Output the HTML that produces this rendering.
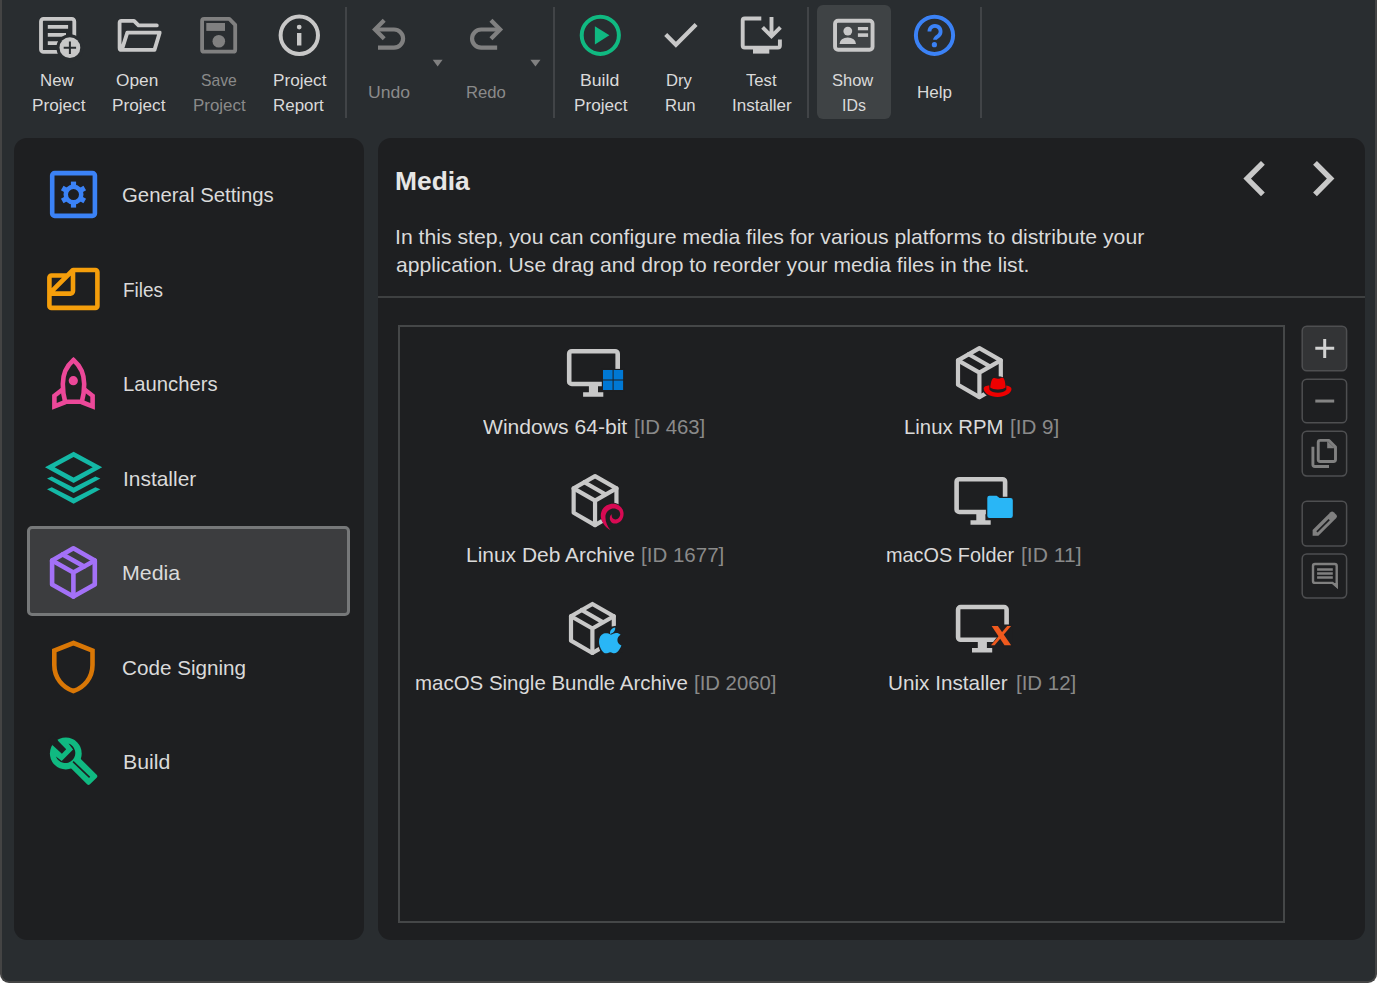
<!DOCTYPE html>
<html lang="en">
<head>
<meta charset="utf-8">
<title>install4j - Media</title>
<style>
html,body{margin:0;padding:0;background:#fff;}
body{width:1377px;height:983px;overflow:hidden;position:relative;font-family:"Liberation Sans",sans-serif;color:#dadada;}
#win{position:absolute;left:0;top:0;width:1377px;height:983px;box-sizing:border-box;background:#292d30;border:2px solid #444;border-top:0;border-radius:0 0 9px 9px;}
.sep{position:absolute;top:7px;height:111px;width:2px;background:#414447;}
.tbsel{position:absolute;left:817px;top:5px;width:74px;height:114px;border-radius:6px;background:#3f4345;}
.panel{position:absolute;top:138px;height:802px;background:#1e1f21;border-radius:13px;}
#side{left:14px;width:350px;}
#main{left:378px;width:987px;}
.navsel{position:absolute;left:27px;top:526px;width:323px;height:90px;box-sizing:border-box;border:3px solid #767879;border-radius:5px;background:#3c3d3f;}
.hr{position:absolute;left:378px;top:296px;width:987px;height:2px;background:#3e4041;}
.list{position:absolute;left:398px;top:325px;width:887px;height:598px;box-sizing:border-box;border:2px solid #454748;}
.tx{position:absolute;white-space:pre;line-height:1;transform-origin:0 0;color:#dadada;}
.dim{color:#8a8a8a;}
.bold{font-weight:bold;color:#e6e6e6;}
svg{position:absolute;left:0;top:0;overflow:visible;}
</style>
</head>
<body>
<div id="win"></div>

<!-- ===== toolbar ===== -->
<div id="toolbar">
<div class="tbsel"></div>
<div class="sep" style="left:344.5px"></div>
<div class="sep" style="left:552.7px"></div>
<div class="sep" style="left:806.5px"></div>
<div class="sep" style="left:979.8px"></div>
<svg width="1000" height="125" viewBox="0 0 1000 125" fill="none">
 <!-- new project -->
 <g stroke="#c8c8c8" stroke-width="3.8" fill="none">
  <rect x="41" y="18.9" width="33.3" height="33" rx="2.5"/>
  <path d="M47.8 26.8H68.1M47.8 34.9H66M47.8 43.1H58"/>
 </g>
 <circle cx="69.9" cy="47.7" r="13.5" fill="#292d30"/>
 <circle cx="69.9" cy="47.7" r="10.4" fill="#c8c8c8"/>
 <path d="M63.7 47.7H76.1M69.9 41.5V53.9" stroke="#292d30" stroke-width="2"/>
 <!-- open project -->
 <path d="M156.8 25.4H138.5L134 20.8H121.6a2 2 0 0 0-2 2V47.9a2 2 0 0 0 2 2H154.5L159.7 32.6H127.3L121.9 49.6" stroke="#c8c8c8" stroke-width="3.8" stroke-linejoin="round" stroke-linecap="round"/>
 <!-- save project -->
 <path d="M202.1 20.9a2 2 0 0 1 2-2H229.3L235.2 24.8V49.7a2 2 0 0 1-2 2H204.1a2 2 0 0 1-2-2Z" stroke="#808080" stroke-width="3.8" stroke-linejoin="round"/>
 <rect x="206.3" y="23" width="18.7" height="7.9" fill="#808080"/>
 <circle cx="218.8" cy="41.3" r="6.3" fill="#808080"/>
 <!-- project report -->
 <circle cx="299.3" cy="35.3" r="18.7" stroke="#c8c8c8" stroke-width="4"/>
 <circle cx="299.2" cy="27.1" r="2.4" fill="#c8c8c8"/>
 <rect x="297" y="33" width="4.4" height="12.5" fill="#c8c8c8"/>
 <!-- undo -->
 <g id="undo" stroke="#808080" stroke-width="4.2">
  <path d="M384.2 20.3L375 29.5L384.2 38.7"/>
  <path d="M376 29.5H394a9.1 9.1 0 0 1 0 18.2H378"/>
 </g>
 <path d="M432.7 59.8H442.6L437.65 66.6Z" fill="#808080"/>
 <!-- redo -->
 <g transform="translate(875.15 0) scale(-1 1)" stroke="#808080" stroke-width="4.2">
  <path d="M384.2 20.3L375 29.5L384.2 38.7"/>
  <path d="M376 29.5H394a9.1 9.1 0 0 1 0 18.2H378"/>
 </g>
 <path d="M530.4 59.8H540.5L535.45 66.6Z" fill="#808080"/>
 <!-- build project -->
 <circle cx="600.3" cy="35.3" r="18.6" stroke="#10b981" stroke-width="4"/>
 <path d="M594.9 26.3V44.5L609.4 35.3Z" fill="#10b981"/>
 <!-- dry run -->
 <path d="M665.7 34.4L675.9 44.7L696.1 24.4" stroke="#c8c8c8" stroke-width="4.2"/>
 <!-- test installer -->
 <path d="M761.3 18.5H744.7a2 2 0 0 0-2 2V45.6a2 2 0 0 0 2 2H777.9a2 2 0 0 0 2-2V39.4" stroke="#c8c8c8" stroke-width="3.9"/>
 <rect x="753" y="47" width="16.3" height="6.6" fill="#c8c8c8"/>
 <path d="M771.5 16.9V35M762.6 27.4L771.5 36.3L780.4 27.4" stroke="#c8c8c8" stroke-width="3.9"/>
 <!-- show ids -->
 <rect x="835.05" y="20.75" width="37.5" height="29" rx="3" stroke="#c8c8c8" stroke-width="3.9"/>
 <circle cx="847.8" cy="31.1" r="4.4" fill="#c8c8c8"/>
 <path d="M839.5 43.9a8.25 6.4 0 0 1 16.5 0Z" fill="#c8c8c8"/>
 <rect x="857.9" y="27" width="10.2" height="3.3" fill="#c8c8c8"/>
 <rect x="857.9" y="33.3" width="10.2" height="3.6" fill="#c8c8c8"/>
 <!-- help -->
 <circle cx="934.5" cy="35.3" r="18.6" stroke="#3b82f6" stroke-width="4"/>
 <path d="M929.4 31.5a5.6 5.6 0 1 1 8.8 4.6c-2.2 1.5-3.2 2.6-3.2 3.6" stroke="#3b82f6" stroke-width="3.8"/>
 <circle cx="934.4" cy="44.7" r="2.6" fill="#3b82f6"/>
</svg>
</div>

<!-- ===== sidebar ===== -->
<div id="side" class="panel"></div>
<div class="navsel"></div>
<svg width="370" height="983" viewBox="0 0 370 983" fill="none">
 <!-- general settings -->
 <rect x="52.2" y="173.1" width="42.7" height="42.8" rx="2.5" stroke="#3b82f6" stroke-width="4.6"/>
 <g transform="translate(73.5 194.6)" fill="#3b82f6">
  <circle r="7.75" fill="none" stroke="#3b82f6" stroke-width="4.5"/>
  <rect x="-2.6" y="-13" width="5.2" height="5"/>
  <rect x="-2.6" y="-13" width="5.2" height="5" transform="rotate(60)"/>
  <rect x="-2.6" y="-13" width="5.2" height="5" transform="rotate(120)"/>
  <rect x="-2.6" y="-13" width="5.2" height="5" transform="rotate(180)"/>
  <rect x="-2.6" y="-13" width="5.2" height="5" transform="rotate(240)"/>
  <rect x="-2.6" y="-13" width="5.2" height="5" transform="rotate(300)"/>
 </g>
 <!-- files -->
 <path d="M49.4 293.6L73 270H95.4a2 2 0 0 1 2 2V305.9a2 2 0 0 1-2 2H51.4a2 2 0 0 1-2-2V277.5a2 2 0 0 1 2-2H67.5M73 270V291.1a2.5 2.5 0 0 1-2.5 2.5H49.4" stroke="#f59e0b" stroke-width="4.6" stroke-linejoin="round"/>
 <!-- launchers -->
 <g stroke="#ec4899" stroke-width="4.6">
  <path d="M73.5 360C66 366.5 62.8 375 62.8 384C62.8 391 63.8 397 65.2 401.8H81.8C83.2 397 84.2 391 84.2 384C84.2 375 81 366.5 73.5 360Z"/>
  <path d="M62.5 389.5L54.4 395.8V406.3L65.5 402"/>
  <path d="M84.5 389.5L92.6 395.8V406.3L81.5 402"/>
 </g>
 <circle cx="73.3" cy="380.7" r="4.6" fill="#ec4899"/>
 <!-- installer -->
 <path d="M45 467.2L73.6 451.7L102.2 467.2L73.6 482.9ZM54.6 467.2L73.6 457.1L92.7 467.2L73.6 477.4Z" fill="#14b8a6" fill-rule="evenodd"/>
 <path d="M47 478.6L51.8 476.4L73.6 487.6L95.4 476.4L100.4 478.6L73.6 493.1ZM47 489.35L51.8 487.15L73.6 498.35L95.4 487.15L100.4 489.35L73.6 503.85Z" fill="#14b8a6"/>
 <!-- media -->
 <g stroke="#a371f7" stroke-width="4.6" stroke-linejoin="round" stroke-linecap="round">
  <path d="M73.4 548.3L94.8 560.6V584.5L73.4 596.6L52.1 584.5V560.6Z"/>
  <path d="M52.1 560.6L73.4 572.4L94.8 560.6M73.4 572.4V596.6M62.7 554.4L84.1 566.5"/>
 </g>
 <!-- code signing -->
 <path d="M73.4 643L92.5 650.5V665C92.5 678 84 687.5 73.4 691C62.8 687.5 54.3 678 54.3 665V650.5Z" stroke="#d97706" stroke-width="4.6"/>
 <!-- build -->
 <g>
  <circle cx="65.8" cy="753.5" r="15.9" fill="#10b981"/>
  <rect x="65.8" y="746.75" width="38.9" height="13.5" rx="2" transform="rotate(45 65.8 753.5)" fill="#10b981"/>
  <path d="M55.9 756.5A10 10 0 1 0 68.5 743.6L73.1 749.5L61.7 761Z" fill="#1e1f21"/>
  <path d="M52.6 745.2L57.2 739.9L66.2 749.2L61.9 753.8Z" fill="#1e1f21"/>
  <path d="M48 740.5L53 735.5L58 740.5L53 745.5Z" fill="#1e1f21"/>
  <path d="M73.1 761.6L89.6 777.3" stroke="#1e1f21" stroke-width="1.6"/>
 </g>
</svg>

<!-- ===== main ===== -->
<div id="main" class="panel"></div>
<div class="hr"></div>
<div class="list"></div>
<svg width="1377" height="983" viewBox="0 0 1377 983" fill="none">
 <!-- nav chevrons -->
 <path d="M1262.9 162.9L1247.2 178.6L1262.9 194.3M1315 162.9L1330.6 178.6L1315 194.3" stroke="#c8c8c8" stroke-width="5.4"/>
 <!-- buttons -->
 <g stroke="#4e4f51" stroke-width="1.5" fill="none">
  <rect x="1302.2" y="326.15" width="44.4" height="44.7" rx="4.6" fill="#333436"/>
  <rect x="1302.2" y="379.15" width="44.4" height="43.6" rx="4.6"/>
  <rect x="1302.2" y="431.15" width="44.4" height="44.8" rx="4.6"/>
  <rect x="1302.2" y="501.15" width="44.4" height="44.9" rx="4.6"/>
  <rect x="1302.2" y="554.05" width="44.4" height="43.9" rx="4.6"/>
 </g>
 <path d="M1315.3 348.3H1334.2M1324.7 339.1V358.1" stroke="#d2d2d2" stroke-width="3"/>
 <path d="M1315.3 401.05H1334.2" stroke="#848484" stroke-width="3"/>
 <g stroke="#808080" stroke-width="2.9">
  <path d="M1318.25 442.4a2 2 0 0 1 2-2H1329L1335.5 447V459.5a2 2 0 0 1-2 2H1320.25a2 2 0 0 1-2-2Z" stroke-linejoin="round"/>
  <path d="M1312.9 446.7V464.5a2 2 0 0 0 2 2H1329"/>
 </g>
 <path d="M1327.2 441V448.2H1334.8Z" fill="#808080"/>
 <!-- pencil -->
 <g>
  <path d="M1312.6 535.8V530L1330.5 512.2a2.3 2.3 0 0 1 3.2 0L1336.3 514.8a2.3 2.3 0 0 1 0 3.2L1318.4 535.8Z" fill="#808080"/>
  <path d="M1316.3 531.3L1328.6 519L1329.8 520.2L1317.5 532.5Z" fill="#1e1f21"/>
 </g>
 <!-- comment -->
 <path d="M1313 566a2 2 0 0 1 2-2H1334.7a2 2 0 0 1 2 2V586.5L1332.5 582.9H1315a2 2 0 0 1-2-2Z" stroke="#808080" stroke-width="2.4"/>
 <path d="M1332.2 583H1337.9V589Z" fill="#808080"/>
 <path d="M1317.1 569.4H1332.8M1317.1 573.45H1332.8M1317.1 577.45H1332.8" stroke="#808080" stroke-width="2.5"/>

 <!-- list icons -->
 <defs>
  <g id="monitor">
   <rect x="2.3" y="2.3" width="48.5" height="32.8" rx="2.6" stroke="#c8c8c8" stroke-width="4.6"/>
   <path d="M22 35.5H31.1V43.3H36.4V47.9H16.2V43.3H22Z" fill="#c8c8c8"/>
  </g>
  <g id="pkg" stroke="#c8c8c8" stroke-width="4.2" stroke-linejoin="round" stroke-linecap="round">
   <path d="M0 -24.5L21.4 -12.2V12.2L0 24.5L-21.4 12.2V-12.2Z"/>
   <path d="M-21.4 -12.2L0 0L21.4 -12.2M0 0V24.5M-10.7 -18.4L10.7 -6.1"/>
  </g>
 </defs>
 <!-- windows -->
 <g>
  <use href="#monitor" x="566.9" y="348.9"/>
  <rect x="601.8" y="368.9" width="22.5" height="22.2" fill="#1e1f21"/>
  <path d="M603 370.1H612.6V379.6H603ZM613.6 370.1H623.1V379.6H613.6ZM603 380.6H612.6V389.9H603ZM613.6 380.6H623.1V389.9H613.6Z" fill="#0078d4"/>
 </g>
 <!-- linux rpm -->
 <g>
  <use href="#pkg" x="979.4" y="372.6"/>
  <path d="M982.4 388.5C982.4 383 989 376.2 997.7 376.2C1006 376.2 1012.8 383 1012.8 388.5C1012.8 394 1006 398.2 997.6 398.2C989 398.2 982.4 394 982.4 388.5Z" fill="#1e1f21"/>
  <path d="M990.2 387.6C990.6 384.5 991 381.3 992.2 379.3C993 377.9 994.4 377.9 995.4 378.3C997 378.9 998.8 378.9 1000.4 378.2C1001.8 377.6 1003.2 377.5 1004 378.9C1005.2 381.1 1005.4 384.6 1005.6 387.6C1003 390.2 992.8 390.2 990.2 387.6Z" fill="#ee0000"/>
  <path d="M983.7 388.6C983.7 386.7 986.3 385.5 989.4 385.5C989.3 386.8 989.3 388.4 989.5 389.8C992.2 393.8 1003.6 393.8 1006.3 389.8C1006.4 388.4 1006.3 386.9 1006.2 385.6C1009.2 386 1011.5 387.2 1011.5 389.1C1011.5 393.5 1005 396.9 997.6 396.9C990.2 396.9 983.7 393.3 983.7 388.6Z" fill="#ee0000"/>
 </g>
 <!-- linux deb -->
 <g>
  <use href="#pkg" x="595.05" y="500.6"/>
  <circle cx="612.8" cy="515" r="12.2" fill="#1e1f21"/>
  <path d="M610.5 530.2C603.5 526 599.8 519 601 513.2C602.4 507 607.5 503.7 613 503.7C619 503.7 623.6 508.3 623.6 513.8C623.6 519.8 619.4 523.6 615.2 523.6C611.6 523.6 609.6 520.4 609.8 517.8C610 516 610.8 514.8 611.8 514.3C611.2 517 612.6 519.4 615.4 519.4C618 519.4 620.2 517 620.2 514C620.2 510.6 617.2 508.4 613.6 508.4C609.2 508.4 605.4 512 605.4 517C605.4 522 607.4 526.6 610.5 530.2Z" fill="#d70a53"/>
 </g>
 <!-- macos single bundle -->
 <g>
  <use href="#pkg" x="592.4" y="628.45"/>
  <path d="M597.6 640C597.6 632 603 626 612 626.4L616 625.8L617 632L623 636V652L613 655.5H604C600 652 597.6 646 597.6 640Z" fill="#1e1f21"/>
  <path d="M610 633.9C609.6 630.4 612.2 627.9 615.2 627.6C615.6 630.9 613.2 633.6 610 633.9Z" fill="#29b6f6"/>
  <path d="M610.6 634.6C608.6 633.2 606 632.8 603.8 633.6C600.6 634.8 599 638 599 641.6C599 646 601.2 650.4 603.6 652.4C605 653.6 606.6 653.6 608 652.9C609.6 652.1 611 652.1 612.6 652.9C614 653.6 615.6 653.4 617 652.2C618.8 650.6 620.4 648.2 621.4 645.4C618.8 644.4 617.4 642.4 617.4 640C617.4 637.8 618.6 636 620.6 634.8C619 633 616.6 632.8 615 633.2C613.4 633.6 612 634.4 610.6 634.6Z" fill="#29b6f6"/>
 </g>
 <!-- macos folder -->
 <g>
  <use href="#monitor" x="954.3" y="476.9"/>
  <path d="M987.3 498a2.2 2.2 0 0 1 2.2-2.2H996.6L999.6 498.1H1010.6a2.2 2.2 0 0 1 2.2 2.2V515.7a2.2 2.2 0 0 1-2.2 2.2H989.5a2.2 2.2 0 0 1-2.2-2.2Z" fill="#1e1f21" stroke="#1e1f21" stroke-width="2.8"/>
  <path d="M987.3 498a2.2 2.2 0 0 1 2.2-2.2H996.6L999.6 498.1H1010.6a2.2 2.2 0 0 1 2.2 2.2V515.7a2.2 2.2 0 0 1-2.2 2.2H989.5a2.2 2.2 0 0 1-2.2-2.2Z" fill="#29b6f6"/>
 </g>
 <!-- unix installer -->
 <g>
  <use href="#monitor" x="955.8" y="604.7"/>
  <path d="M990.3 624.6H1012.8V646.7H989.4L997.4 636.6Z" fill="#1e1f21"/>
  <path d="M991.6 625.9H997.9L1011.1 645.3H1004.5Z" fill="#f05a1e"/>
  <path d="M1007.2 625.9H1011.1L994.6 645.3H991Z" fill="#f05a1e"/>
 </g>
</svg>

<!-- ===== text ===== -->
<div id="toolbar-labels">
<div id="t_new" class="tx" style="left:39.86px;top:71.61px;font-size:17px;transform:scaleX(0.9900)">New</div>
<div id="t_newp" class="tx" style="left:31.55px;top:96.61px;font-size:17px;transform:scaleX(1.0098)">Project</div>
<div id="t_open" class="tx" style="left:116.12px;top:71.61px;font-size:17px;transform:scaleX(1.0160)">Open</div>
<div id="t_openp" class="tx" style="left:112.25px;top:96.61px;font-size:17px;transform:scaleX(1.0098)">Project</div>
<div id="t_save" class="tx dim" style="left:200.58px;top:71.61px;font-size:17px;transform:scaleX(0.9228)">Save</div>
<div id="t_savep" class="tx dim" style="left:193.25px;top:96.61px;font-size:17px;transform:scaleX(0.9947)">Project</div>
<div id="t_proj" class="tx" style="left:272.85px;top:71.61px;font-size:17px;transform:scaleX(1.0098)">Project</div>
<div id="t_rep" class="tx" style="left:272.83px;top:96.61px;font-size:17px;transform:scaleX(0.9961)">Report</div>
<div id="t_undo" class="tx dim" style="left:367.51px;top:83.61px;font-size:17px;transform:scaleX(1.0358)">Undo</div>
<div id="t_redo" class="tx dim" style="left:466.48px;top:83.61px;font-size:17px;transform:scaleX(0.9806)">Redo</div>
<div id="t_build" class="tx" style="left:580.49px;top:71.61px;font-size:17px;transform:scaleX(1.0394)">Build</div>
<div id="t_buildp" class="tx" style="left:573.55px;top:96.61px;font-size:17px;transform:scaleX(1.0098)">Project</div>
<div id="t_dry" class="tx" style="left:666.15px;top:71.61px;font-size:17px;transform:scaleX(0.9779)">Dry</div>
<div id="t_run" class="tx" style="left:664.87px;top:96.61px;font-size:17px;transform:scaleX(0.9814)">Run</div>
<div id="t_test" class="tx" style="left:746.00px;top:71.61px;font-size:17px;transform:scaleX(0.9799)">Test</div>
<div id="t_inst" class="tx" style="left:731.84px;top:96.61px;font-size:17px;transform:scaleX(1.0046)">Installer</div>
<div id="t_show" class="tx" style="left:831.68px;top:71.61px;font-size:17px;transform:scaleX(0.9696)">Show</div>
<div id="t_ids" class="tx" style="left:841.93px;top:96.61px;font-size:17px;transform:scaleX(0.9352)">IDs</div>
<div id="t_help" class="tx" style="left:917.23px;top:83.61px;font-size:17px;transform:scaleX(1.0020)">Help</div>
</div>
<nav id="nav-labels">
<div id="s_gen" class="tx" style="left:122.49px;top:184.22px;font-size:21px;transform:scaleX(0.9701)">General Settings</div>
<div id="s_files" class="tx" style="left:123.39px;top:279.22px;font-size:21px;transform:scaleX(0.9030)">Files</div>
<div id="s_launch" class="tx" style="left:122.78px;top:373.22px;font-size:21px;transform:scaleX(0.9644)">Launchers</div>
<div id="s_inst" class="tx" style="left:122.73px;top:468.22px;font-size:21px;transform:scaleX(0.9962)">Installer</div>
<div id="s_media" class="tx" style="left:121.99px;top:562.22px;font-size:21px;transform:scaleX(1.0181)">Media</div>
<div id="s_code" class="tx" style="left:122.46px;top:657.22px;font-size:21px;transform:scaleX(0.9842)">Code Signing</div>
<div id="s_build" class="tx" style="left:122.71px;top:751.22px;font-size:21px;transform:scaleX(1.0151)">Build</div>
</nav>
<header id="step-header">
<div id="m_title" class="tx bold" style="left:395.26px;top:168.84px;font-size:25px;transform:scaleX(1.0549)">Media</div>
<div id="m_d1" class="tx" style="left:395.38px;top:226.22px;font-size:21px;transform:scaleX(1.0093)">In this step, you can configure media files for various platforms to distribute your</div>
<div id="m_d2" class="tx" style="left:395.73px;top:254.22px;font-size:21px;transform:scaleX(1.0048)">application. Use drag and drop to reorder your media files in the list.</div>
</header>
<div id="media-list-labels">
<div id="l_win" class="tx" style="left:483.48px;top:416.22px;font-size:21px;transform:scaleX(1.0045)">Windows 64-bit</div>
<div id="l_win_id" class="tx dim" style="left:634.20px;top:416.22px;font-size:21px;transform:scaleX(0.9685)">[ID 463]</div>
<div id="l_deb" class="tx" style="left:466.32px;top:544.22px;font-size:21px;transform:scaleX(0.9972)">Linux Deb Archive</div>
<div id="l_deb_id" class="tx dim" style="left:640.68px;top:544.22px;font-size:21px;transform:scaleX(0.9769)">[ID 1677]</div>
<div id="l_mac" class="tx" style="left:414.99px;top:672.22px;font-size:21px;transform:scaleX(0.9744)">macOS Single Bundle Archive</div>
<div id="l_mac_id" class="tx dim" style="left:693.90px;top:672.22px;font-size:21px;transform:scaleX(0.9672)">[ID 2060]</div>
<div id="l_rpm" class="tx" style="left:904.48px;top:416.22px;font-size:21px;transform:scaleX(0.9681)">Linux RPM</div>
<div id="l_rpm_id" class="tx dim" style="left:1010.17px;top:416.22px;font-size:21px;transform:scaleX(0.9812)">[ID 9]</div>
<div id="l_fold" class="tx" style="left:886.00px;top:544.22px;font-size:21px;transform:scaleX(0.9467)">macOS Folder</div>
<div id="l_fold_id" class="tx dim" style="left:1020.85px;top:544.22px;font-size:21px;transform:scaleX(1.0045)">[ID 11]</div>
<div id="l_unix" class="tx" style="left:887.87px;top:672.22px;font-size:21px;transform:scaleX(0.9868)">Unix Installer</div>
<div id="l_unix_id" class="tx dim" style="left:1015.78px;top:672.22px;font-size:21px;transform:scaleX(0.9737)">[ID 12]</div>
</div>
</body>
</html>
